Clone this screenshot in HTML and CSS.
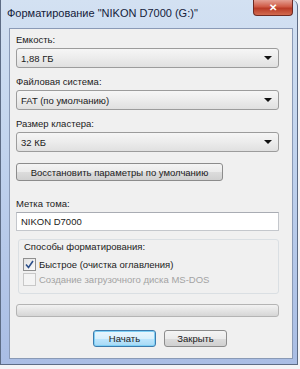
FILE: index.html
```html
<!DOCTYPE html>
<html lang="ru">
<head>
  <meta charset="UTF-8" />
  <title>Форматирование</title>
  <link rel="stylesheet" href="styles.css">
</head>
<body>
  <div class="window">
    <div class="title-bar">
      <span class="title">Форматирование "NIKON D7000 (G:)"</span>
      <button class="close">&#x2715;</button>
    </div>

    <div class="content">
      <div class="label">Емкость:</div>
      <div class="combo"><span>1,88 ГБ</span><i class="arrow"></i></div>

      <div class="label">Файловая система:</div>
      <div class="combo"><span>FAT (по умолчанию)</span><i class="arrow"></i></div>

      <div class="label">Размер кластера:</div>
      <div class="combo"><span>32 КБ</span><i class="arrow"></i></div>

      <button class="btn restore">Восстановить параметры по умолчанию</button>

      <div class="label volume">Метка тома:</div>
      <div class="textbox">NIKON D7000</div>

      <div class="group">
        <div class="group-title">Способы форматирования:</div>
        <div class="check-row">
          <span class="check checked">
            <svg width="9" height="9" viewBox="0 0 9 9"><path d="M1 4.5 L3.5 7.5 L8 1" fill="none" stroke="#2c4f8a" stroke-width="1.6"/></svg>
          </span>
          <span>Быстрое (очистка оглавления)</span>
        </div>
        <div class="check-row disabled">
          <span class="check"></span>
          <span>Создание загрузочного диска MS-DOS</span>
        </div>
      </div>

      <div class="progress"></div>

      <div class="actions">
        <button class="btn default">Начать</button>
        <button class="btn">Закрыть</button>
      </div>
    </div>
  </div>
</body>
</html>
```

FILE: styles.css
```css
body {
  margin: 0;
  padding: 0;
  background: #f3f4f6;
  font-family: "Liberation Sans", Arial, sans-serif;
  font-size: 9.5px;
  color: #1b1b1b;
}

.window {
  width: 296px;
  height: 364px;
  border: 1px solid #5d6c85;
  border-top: none;
  border-radius: 0 6px 0 0;
  background: linear-gradient(180deg, #d3e1f2 0%, #c2d4ee 40%, #a9bde4 100%);
  display: flex;
  flex-direction: column;
}

.title-bar {
  height: 28px;
  display: flex;
  justify-content: space-between;
  align-items: flex-start;
}

.title {
  margin: 7px 0 0 6px;
  font-size: 11px;
  color: #14213a;
}

.close {
  width: 40px;
  height: 16px;
  margin-right: 4px;
  padding: 0;
  border: 1px solid #6e2a22;
  border-top: none;
  border-radius: 0 0 4px 4px;
  background: linear-gradient(180deg, #e4a093 0%, #cf5a45 45%, #b93b26 55%, #d16a4f 100%);
  color: #fff;
  font-size: 10px;
  font-weight: bold;
  line-height: 14px;
  cursor: pointer;
}

.content {
  flex: 1;
  margin: 0 4px 5px 8px;
  padding: 4px 13px 0 6px;
  background: #f0f0f0;
  border: 1px solid #8a9ab6;
  box-sizing: border-box;
}

.label {
  height: 14px;
  line-height: 14px;
  margin-bottom: 1px;
}

.combo + .label {
  margin-top: 7px;
}

.combo {
  height: 20px;
  box-sizing: border-box;
  border: 1px solid #9c9c9c;
  border-radius: 3px;
  background: linear-gradient(180deg, #f6f6f6 0%, #ececec 50%, #e0e0e0 100%);
  display: flex;
  align-items: center;
  justify-content: space-between;
  padding: 0 6px 0 4px;
}

.arrow {
  width: 0;
  height: 0;
  border-left: 4px solid transparent;
  border-right: 4px solid transparent;
  border-top: 4px solid #111;
}

.btn {
  font-family: inherit;
  font-size: 9.5px;
  color: #1b1b1b;
  height: 18px;
  padding: 0;
  border: 1px solid #8c8c8c;
  border-radius: 3px;
  background: linear-gradient(180deg, #f4f4f4 0%, #ebebeb 50%, #dcdcdc 51%, #d0d0d0 100%);
  cursor: pointer;
}

.restore {
  display: block;
  width: 207px;
  margin-top: 11px;
}

.volume {
  margin-top: 16px;
}

.textbox {
  height: 19px;
  box-sizing: border-box;
  border: 1px solid #c4c7cc;
  border-top-color: #a9acb3;
  background: #fff;
  padding: 0 4px;
  line-height: 17px;
}

.group {
  margin: 8px 0 0 2px;
  height: 55px;
  box-sizing: border-box;
  border: 1px solid #dadfe3;
  border-radius: 3px;
  padding: 0 0 0 4px;
}

.group-title {
  height: 13px;
  line-height: 13px;
  margin: 0 0 4px 1px;
}

.check-row {
  display: flex;
  align-items: center;
  gap: 3px;
  height: 15px;
}

.check {
  width: 11px;
  height: 11px;
  border: 1px solid #8f8f8f;
  background: linear-gradient(135deg, #e2e2e2 0%, #fbfbfb 100%);
  display: flex;
  align-items: center;
  justify-content: center;
}

.disabled {
  color: #a3a3a3;
}

.disabled .check {
  border-color: #c8c8c8;
  background: #f4f4f4;
}

.progress {
  margin-top: 10px;
  height: 13px;
  box-sizing: border-box;
  border: 1px solid #b4b4b4;
  border-radius: 3px;
  background: linear-gradient(180deg, #f2f2f2 0%, #e4e4e4 50%, #d6d6d6 100%);
}

.actions {
  margin-top: 13px;
  display: flex;
  gap: 8px;
  padding-left: 77px;
}

.actions .btn {
  width: 63px;
  height: 17px;
}

.default {
  border-color: #3d7bad;
  box-shadow: inset 0 0 0 1px #7fd0f5;
  background: linear-gradient(180deg, #eaf6fd 0%, #d9f0fc 50%, #bee6fd 51%, #a7d9f5 100%);
}
```
